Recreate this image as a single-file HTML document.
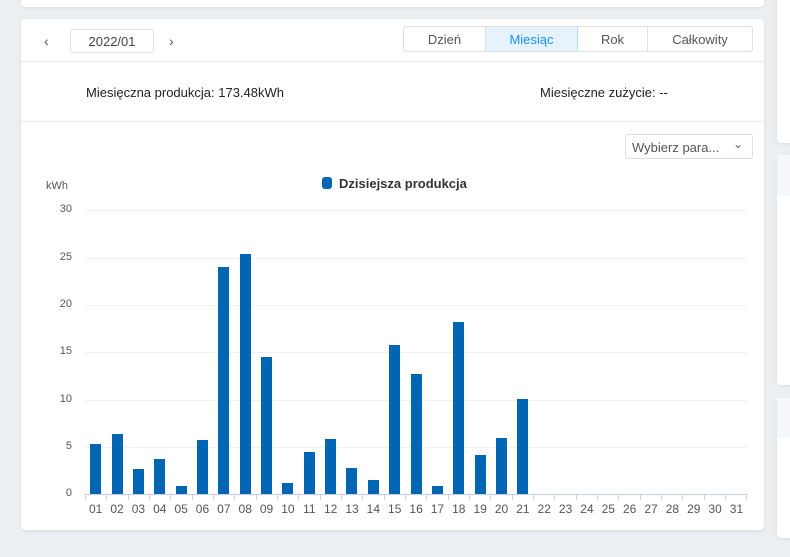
<!DOCTYPE html>
<html><head><meta charset="utf-8"><style>
*{margin:0;padding:0;box-sizing:border-box}
body{width:790px;height:557px;background:#ebeff2;font-family:"Liberation Sans",sans-serif;position:relative;overflow:hidden;color:#333}
.card{position:absolute;background:#fff;border-radius:4px;box-shadow:0 1px 3px rgba(0,0,0,.08)}
.abs{position:absolute}
.tabs{position:absolute;left:403px;top:26px;width:350px;height:26px;border:1px solid #dcdfe6;border-radius:3px;display:flex;font-size:13px;color:#555}
.tabs div{display:flex;align-items:center;justify-content:center;border-right:1px solid #dcdfe6}
.tabs div:last-child{border-right:none}
.grid{position:absolute;left:85px;width:662px;height:1px;background:#eef0f4}
.yl{position:absolute;left:40px;width:32px;text-align:right;font-size:11px;color:#555}
.bars{position:absolute;left:85px;top:210px;width:662px;height:284px;display:flex;align-items:flex-end}
.bars div{flex:1;display:flex;justify-content:center;align-items:flex-end;height:100%}
.bars span{display:block;width:11px;background:#0066b3}
.xl{position:absolute;left:85px;top:502px;width:662px;display:flex;font-size:12px;color:#555}
.xl div{flex:1;text-align:center}
.ticks{position:absolute;left:85px;top:494px;width:662px;height:6px;display:flex;border-top:1px solid #c8cde0}
.ticks div{flex:1;border-left:1px solid #c8cde0}
.ticks div:last-child{border-right:1px solid #c8cde0}
</style></head><body>
<div class="card" style="left:21px;top:-5px;width:743px;height:12px"></div>
<div class="card" style="left:777px;top:-5px;width:20px;height:148px"></div>
<div class="card" style="left:777px;top:155px;width:20px;height:230px"><div style="height:41px;background:#f5f7fa"></div></div>
<div class="card" style="left:777px;top:398px;width:20px;height:140px"><div style="height:40px;background:#f5f7fa"></div></div>

<div class="card" style="left:21px;top:19px;width:743px;height:511px"></div>
<div class="abs" style="left:21px;top:61px;width:743px;height:1px;background:#e8eaee"></div>
<div class="abs" style="left:21px;top:121px;width:743px;height:1px;background:#e8eaee"></div>
<div class="abs" style="left:44px;top:33px;font-size:14px;color:#555">&#8249;</div>
<div class="abs" style="left:70px;top:29px;width:84px;height:24px;border:1px solid #dcdfe6;border-radius:3px;font-size:13px;color:#444;display:flex;align-items:center;justify-content:center">2022/01</div>
<div class="abs" style="left:169px;top:33px;font-size:14px;color:#555">&#8250;</div>
<div class="tabs"><div style="width:82px">Dzień</div><div style="width:92px;background:#e6f3ff;color:#1890ff;border-color:#b8dcfb">Miesiąc</div><div style="width:70px">Rok</div><div style="flex:1">Całkowity</div></div>

<div class="abs" style="left:86px;top:85px;font-size:13px;color:#222">Miesięczna produkcja: 173.48kWh</div>
<div class="abs" style="left:540px;top:85px;font-size:13px;color:#222">Miesięczne zużycie: --</div>

<div class="abs" style="left:625px;top:134px;width:128px;height:25px;border:1px solid #dcdfe6;border-radius:3px;font-size:13px;color:#555;padding:5px 0 0 6px">Wybierz para...<span style="position:absolute;right:9px;top:2px;font-size:12px;color:#666">&#8964;</span></div>

<div class="abs" style="left:322px;top:177px;width:10px;height:12px;border-radius:3px;background:#0066b3"></div>
<div class="abs" style="left:339px;top:176px;font-size:13px;font-weight:bold;color:#333">Dzisiejsza produkcja</div>
<div class="abs" style="left:46px;top:180px;font-size:11px;color:#555">kWh</div>

<div class="grid" style="top:210px"></div><div class="grid" style="top:258px"></div><div class="grid" style="top:305px"></div><div class="grid" style="top:352px"></div><div class="grid" style="top:400px"></div><div class="grid" style="top:447px"></div>
<div class="yl" style="top:203px">30</div><div class="yl" style="top:251px">25</div><div class="yl" style="top:298px">20</div><div class="yl" style="top:345px">15</div><div class="yl" style="top:393px">10</div><div class="yl" style="top:440px">5</div><div class="yl" style="top:487px">0</div>

<div class="bars">
<div><span style="height:50px"></span></div><div><span style="height:60px"></span></div><div><span style="height:25px"></span></div><div><span style="height:35px"></span></div><div><span style="height:8px"></span></div><div><span style="height:54px"></span></div><div><span style="height:227px"></span></div><div><span style="height:240px"></span></div><div><span style="height:137px"></span></div><div><span style="height:11px"></span></div><div><span style="height:42px"></span></div><div><span style="height:55px"></span></div><div><span style="height:26px"></span></div><div><span style="height:14px"></span></div><div><span style="height:149px"></span></div><div><span style="height:120px"></span></div><div><span style="height:8px"></span></div><div><span style="height:172px"></span></div><div><span style="height:39px"></span></div><div><span style="height:56px"></span></div><div><span style="height:95px"></span></div>
<div></div><div></div><div></div><div></div><div></div><div></div><div></div><div></div><div></div><div></div>
</div>
<div class="ticks"><div></div><div></div><div></div><div></div><div></div><div></div><div></div><div></div><div></div><div></div><div></div><div></div><div></div><div></div><div></div><div></div><div></div><div></div><div></div><div></div><div></div><div></div><div></div><div></div><div></div><div></div><div></div><div></div><div></div><div></div><div></div></div>
<div class="xl"><div>01</div><div>02</div><div>03</div><div>04</div><div>05</div><div>06</div><div>07</div><div>08</div><div>09</div><div>10</div><div>11</div><div>12</div><div>13</div><div>14</div><div>15</div><div>16</div><div>17</div><div>18</div><div>19</div><div>20</div><div>21</div><div>22</div><div>23</div><div>24</div><div>25</div><div>26</div><div>27</div><div>28</div><div>29</div><div>30</div><div>31</div></div>
</body></html>
